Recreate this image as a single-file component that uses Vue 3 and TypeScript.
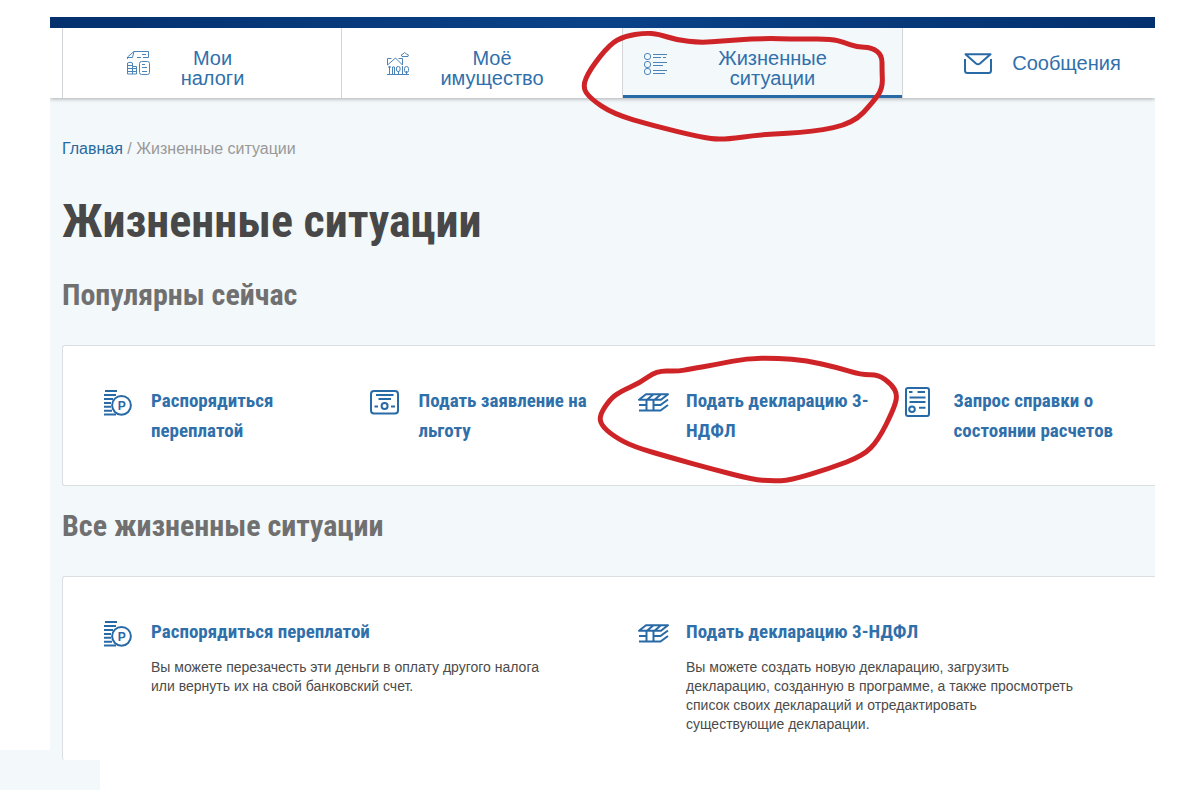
<script setup lang="ts">
interface Tab {
  icon: string
  lines: string[]
  active?: boolean
  single?: boolean
}

interface Situation {
  icon: string
  title: string[]
  text?: string[]
}

type Point = [number, number]

const tabs: Tab[] = [
  { icon: 'taxes', lines: ['Мои', 'налоги'] },
  { icon: 'house', lines: ['Моё', 'имущество'] },
  { icon: 'list', lines: ['Жизненные', 'ситуации'], active: true },
  { icon: 'mail', lines: ['Сообщения'], single: true },
]

const popular: Situation[] = [
  { icon: 'money', title: ['Распорядиться', 'переплатой'] },
  { icon: 'form', title: ['Подать заявление на', 'льготу'] },
  { icon: 'stack', title: ['Подать декларацию 3-', 'НДФЛ'] },
  { icon: 'report', title: ['Запрос справки о', 'состоянии расчетов'] },
]

const all: Situation[] = [
  {
    icon: 'money',
    title: ['Распорядиться переплатой'],
    text: ['Вы можете перезачесть эти деньги в оплату другого налога', 'или вернуть их на свой банковский счет.'],
  },
  {
    icon: 'stack',
    title: ['Подать декларацию 3-НДФЛ'],
    text: [
      'Вы можете создать новую декларацию, загрузить',
      'декларацию, созданную в программе, а также просмотреть',
      'список своих деклараций и отредактировать',
      'существующие декларации.',
    ],
  },
]

// Closed freehand loop: quadratic curves through the midpoints of neighbouring points.
function loop(points: Point[]): string {
  const mid = (a: Point, b: Point): string => `${(a[0] + b[0]) / 2} ${(a[1] + b[1]) / 2}`
  const last = points[points.length - 1]
  let d = `M${mid(last, points[0])}`
  points.forEach((p, i) => {
    d += `Q${p[0]} ${p[1]} ${mid(p, points[(i + 1) % points.length])}`
  })
  return d + 'Z'
}

const tabLoop = loop([
  [225, 69], [265, 72], [320, 90], [390, 98], [460, 93], [560, 85], [700, 87], [785, 87], [820, 97], [860, 111],
  [905, 112], [936, 135], [936, 180], [938, 235], [910, 275], [850, 340], [730, 366], [575, 373], [455, 390],
  [390, 381], [250, 347], [130, 312], [60, 265], [37, 230], [60, 178], [120, 102], [165, 78],
])

const cardLoop = loop([
  [200, 107], [265, 109], [300, 102], [380, 88], [470, 70], [560, 69], [650, 77], [740, 97], [815, 120], [865, 119],
  [905, 148], [923, 180], [910, 225], [865, 315], [820, 362], [720, 400], [600, 436], [545, 438], [490, 434],
  [370, 403], [250, 370], [130, 335], [70, 303], [33, 270], [29, 240], [60, 193], [90, 170], [150, 143],
])
</script>

<template>
  <div class="canvas">
    <svg class="sprite" aria-hidden="true">
      <symbol id="taxes" viewBox="0 0 25 26">
        <path d="M1.5 9V7L8 1.5h14.5v6M1.5 7.500h5l1.500-6M11 7.500h4M16 4.500h4M17 7.500h5.500" />
        <path d="M1.500 13v11h9v-7.500h-4V13q-2.500-1.500-5 0zM1.500 15.500h5M1.500 18.500h9M1.500 21.500h9M6.500 16.500V24" />
        <rect x="13.500" y="11.500" width="10" height="13" rx="2" />
        <path d="M16 14.500h3M16 17.500h5M16 21.500h5" />
      </symbol>
      <symbol id="house" viewBox="0 0 24 25">
        <path d="M16 5.500q-2-2 1-2.500 1.500-3 3.500 0 3 .500 1.500 2.500z" />
        <path d="M1.500 14V7.500h4M1.500 14l8-7 7 7V7.500h-4M3.500 15v8.500M1 23.500h22M2 16h3M6.500 23v-7h2v7M16.500 15v8.500" />
        <rect x="10.500" y="15.500" width="3.500" height="5" rx="1.500" />
        <path d="M12.500 20v3M20.500 23v-3" />
        <rect x="18.500" y="15.500" width="4" height="6" rx="2" />
      </symbol>
      <symbol id="list" viewBox="0 0 24 25">
        <rect x=".500" y="2.500" width="6" height="6" rx="2.500" />
        <rect x=".500" y="10.500" width="6" height="6" rx="2.500" />
        <rect x=".500" y="17.500" width="6" height="6" rx="2.500" />
        <path d="M9 3.500h14M9 6.500h8M19 6.500h3M9 11.500h14M9 14.500h10M9 19.500h14M9 22.500h12" />
      </symbol>
      <symbol id="mail" viewBox="0 0 28 21">
        <path d="M1.500 1.200h25L16 10.500q-2 1.600-4 0z" />
        <path d="M1 6v11.500Q1 20 3.500 20h21q2.500 0 2.500-2.500V6" />
      </symbol>
      <symbol id="money" viewBox="0 0 29 28">
        <path d="M2 3h12M1 7h12M1 11h9M1 15h7M1 18.800h7M1 22.700h8M1 26.500h12" />
        <circle cx="18.500" cy="17.300" r="9.400" />
        <text x="18.700" y="21.500" text-anchor="middle">P</text>
      </symbol>
      <symbol id="form" viewBox="0 0 29 25">
        <rect x="1" y="1" width="27" height="22.500" rx="3" />
        <path d="M6 5h17.500M8.500 9H21M4.500 16.500H8M21 16.500h4" />
        <circle cx="14.600" cy="16" r="3" />
      </symbol>
      <symbol id="stack" viewBox="0 0 31 19">
        <path d="M1 6.700l7-5.500h22l-7 5.500zM9 6.700l6.500-5.500M16.500 6.700l6.500-5.500" />
        <path d="M1 12h7.500M1 17.500h7.500V6.700M15.500 6.700v10.800M8.500 17.500h14L30 12M15.500 12h7L30 6.500" />
      </symbol>
      <symbol id="report" viewBox="0 0 25 30">
        <rect x="1" y="1" width="23" height="28" rx="2" />
        <path d="M4 5h3.500M12.500 5H20M4.500 10.500h16M4.500 15h16M14 20.800h6.500" />
        <circle cx="7" cy="22.200" r="2.800" />
      </symbol>
    </svg>

    <div class="page">
      <div class="strip"></div>
      <nav class="tabs">
        <a v-for="tab in tabs" :key="tab.icon" href="#" class="tab" :class="{ active: tab.active, single: tab.single }">
          <svg class="icon" :class="'i-' + tab.icon" aria-hidden="true"><use :href="'#' + tab.icon" /></svg>
          <span class="label"><span v-for="line in tab.lines" :key="line" class="line">{{ line }}</span></span>
        </a>
      </nav>

      <main class="content">
        <div class="crumbs"><a href="#">Главная</a> / Жизненные ситуации</div>
        <h1>Жизненные ситуации</h1>

        <h2>Популярны сейчас</h2>
        <section class="card popular">
          <a v-for="item in popular" :key="item.icon" href="#" class="item">
            <span class="slot"><svg class="icon" :class="'i-' + item.icon" aria-hidden="true"><use :href="'#' + item.icon" /></svg></span>
            <span class="title"><span v-for="line in item.title" :key="line" class="line">{{ line }}</span></span>
          </a>
        </section>

        <h2>Все жизненные ситуации</h2>
        <section class="card all">
          <div v-for="item in all" :key="item.icon" class="item">
            <span class="slot"><svg class="icon" :class="'i-' + item.icon" aria-hidden="true"><use :href="'#' + item.icon" /></svg></span>
            <div>
              <a href="#" class="title"><span v-for="line in item.title" :key="line" class="line">{{ line }}</span></a>
              <p><span v-for="line in item.text" :key="line" class="line">{{ line }}</span></p>
            </div>
          </div>
        </section>
      </main>
    </div>
    <div class="patch"></div>

    <svg class="mark tab-mark" viewBox="0 0 1050 450" aria-hidden="true"><path :d="tabLoop" /></svg>
    <svg class="mark card-mark" viewBox="0 0 1050 480" aria-hidden="true"><path :d="cardLoop" /></svg>
  </div>
</template>

<style>
body {
  background: #fff;
}
</style>

<style scoped>
.canvas {
  position: relative;
  padding-top: 17px;
  overflow: hidden;
  font-family: "Liberation Sans", Arial, sans-serif;
}
.sprite {
  display: none;
}
.page {
  position: relative;
  z-index: 1;
  margin: 0 45px 0 50px;
}
.strip {
  height: 11px;
  background: linear-gradient(90deg, #04306e, #0a4288 50%, #04306e);
}
.tabs {
  position: relative;
  display: grid;
  grid-template-columns: 279fr 281fr 280fr 253fr;
  height: 70px;
  padding-left: 12px;
  background: #fff;
  box-shadow: 0 1px 4px rgba(0, 0, 0, 0.3);
  clip-path: inset(0 0 -8px 0);
}
.tab {
  display: flex;
  align-items: center;
  justify-content: center;
  gap: 30px;
  padding: 0 34px 0 0;
  box-sizing: border-box;
  border-left: 1px solid #d3d6d9;
  color: #3170ab;
  font-size: 20px;
  line-height: 20px;
  text-align: center;
  text-decoration: none;
}
.tab .icon {
  stroke: #4c84b8;
  stroke-width: 1;
}
.tab.active {
  background: #f3f8fb;
  box-shadow: inset 0 -3px #286aa6;
}
.tab.active .label {
  width: 150px;
}
.tab.single {
  gap: 20px;
  padding: 0 0 0 27px;
}
.tab.single .icon {
  stroke: #286aa6;
  stroke-width: 2;
}
.label {
  padding-top: 10px;
}
.tab.single .label {
  padding-top: 0;
}
.line {
  display: block;
}
.content {
  padding: 41px 0 0 12px;
  background: #f3f8fb;
}
.crumbs {
  font-size: 16px;
  line-height: 20px;
  color: #999;
}
.crumbs a {
  color: #286a9f;
  text-decoration: none;
}
h1,
h2,
.title {
  font-family: "Roboto Condensed", "Liberation Sans Narrow", "DejaVu Sans Condensed", sans-serif;
  font-weight: 700;
}
h1 {
  margin: 32px 0 0;
  font-size: 46px;
  line-height: 60px;
  color: #484848;
}
h2 {
  margin: 24px 0 30px;
  font-size: 30px;
  line-height: 40px;
  color: #707070;
}
.card {
  display: grid;
  box-sizing: border-box;
  padding: 40px 0 0 40px;
  background: #fff;
  border: 1px solid #dcdfe1;
  border-right: 0;
  border-radius: 3px 0 0 3px;
}
.popular {
  grid-template-columns: 268fr 268fr 268fr 250fr;
  padding-bottom: 39px;
}
.popular + h2 {
  margin-top: 20px;
}
.all {
  grid-template-columns: 535fr 517fr;
  padding-bottom: 26px;
  border-bottom: 0;
}
.item {
  display: grid;
  grid-template-columns: 48px 1fr;
  text-decoration: none;
}
.slot {
  display: flex;
  align-items: center;
  height: 32px;
}
.title {
  color: #2f70ab;
  font-size: 19px;
  line-height: 30px;
  text-decoration: none;
  white-space: nowrap;
}
p {
  margin: 11px 0 0;
  color: #4b4b4b;
  font-size: 14px;
  line-height: 19px;
}
.icon {
  flex: none;
  fill: none;
  stroke: #286aa6;
  stroke-width: 2;
  stroke-linejoin: round;
}
symbol text {
  fill: #286aa6;
  stroke: none;
  font: 700 12px "Liberation Sans", Arial, sans-serif;
}
.i-taxes {
  width: 25px;
  height: 26px;
}
.i-house,
.i-list {
  width: 24px;
  height: 25px;
}
.i-mail {
  width: 28px;
  height: 21px;
}
.i-money {
  width: 29px;
  height: 28px;
}
.i-form {
  width: 29px;
  height: 25px;
}
.i-stack {
  width: 31px;
  height: 19px;
}
.i-report {
  width: 25px;
  height: 30px;
}
.patch {
  width: 100px;
  height: 40px;
  margin-top: -10px;
  background: #f3f8fb;
}
.mark {
  position: absolute;
  z-index: 2;
  fill: none;
  stroke: #cf2427;
  stroke-width: 15;
  pointer-events: none;
}
.tab-mark {
  left: 570px;
  top: 10px;
  width: 350px;
  height: 150px;
}
.card-mark {
  left: 590px;
  top: 335px;
  width: 350px;
  height: 160px;
}
</style>
